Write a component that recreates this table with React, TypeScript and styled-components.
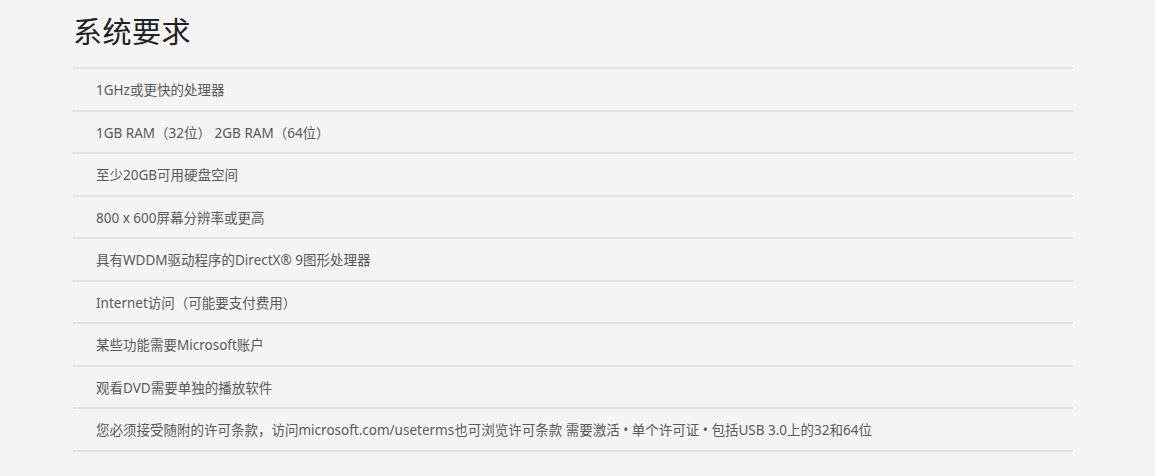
import React from 'react';
import styled, { createGlobalStyle } from 'styled-components';

const GlobalStyle = createGlobalStyle`
  html, body {
    margin: 0;
    padding: 0;
    background: #f4f4f4;
  }
  body {
    font-family: "Noto Sans", "Noto Sans CJK SC", sans-serif;
  }
`;

const items = [
  '1GHz或更快的处理器',
  '1GB RAM（32位） 2GB RAM（64位）',
  '至少20GB可用硬盘空间',
  '800 x 600屏幕分辨率或更高',
  '具有WDDM驱动程序的DirectX® 9图形处理器',
  'Internet访问（可能要支付费用）',
  '某些功能需要Microsoft账户',
  '观看DVD需要单独的播放软件',
  '您必须接受随附的许可条款，访问microsoft.com/useterms也可浏览许可条款 需要激活 • 单个许可证 • 包括USB 3.0上的32和64位',
];

const App = () => {
  return (
    <>
      <GlobalStyle />
      <St.Page>
        <St.Title>系统要求</St.Title>
        <St.List>
          {items.map((text) => (
            <St.Row key={text}>{text}</St.Row>
          ))}
        </St.List>
      </St.Page>
    </>
  );
};

export default App;

const St = {
  Page: styled.div`
    width: 1000px;
    height: 476px;
    padding: 0 0 0 73px;
    box-sizing: content-box;
  `,
  Title: styled.h1`
    margin: 0;
    height: 67px;
    display: flex;
    align-items: center;
    padding-bottom: 8px;
    box-sizing: border-box;
    font-family: "Noto Sans CJK SC", sans-serif;
    font-size: 29px;
    font-weight: 400;
    color: #222;
    letter-spacing: 0.5px;
  `,
  List: styled.ul`
    list-style: none;
    margin: 0;
    padding: 0;
    border-top: 2px solid #e2e2e2;
  `,
  Row: styled.li`
    height: 40.5px;
    display: flex;
    align-items: center;
    padding-left: 23px;
    border-bottom: 2px solid #e2e2e2;
    font-size: 13.5px;
    color: #5a5a5a;
  `,
};
